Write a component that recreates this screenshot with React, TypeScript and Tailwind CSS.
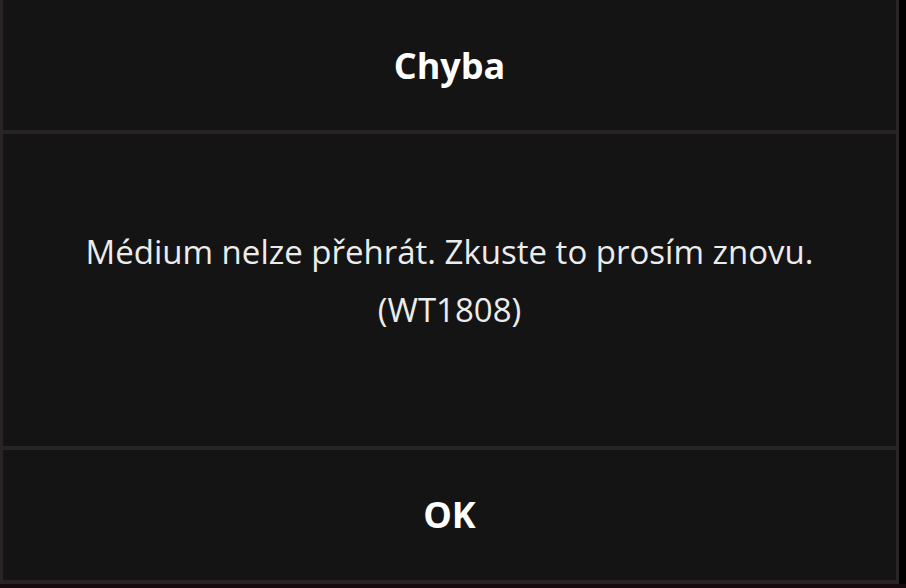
export default function App() {
  return (
    <div className="flex h-[588px] w-[906px] flex-col overflow-hidden bg-[#170a0e]">
      <div className="flex h-[584px] bg-black">
        <div
          className="flex w-[899px] flex-col gap-[4px] bg-[#272326] px-[3px] pb-[4px]"
          style={{ fontFamily: '"Open Sans", "Noto Sans", sans-serif' }}
        >
          <header className="flex h-[130px] items-center justify-center bg-[#141414] pt-[2px]">
            <h1 className="text-[36px] font-bold text-white">Chyba</h1>
          </header>

          <section className="flex h-[312px] flex-col items-center justify-center bg-[#141414] pb-[18px] text-center text-[33px] leading-[58px] text-[#ececec]">
            <p>Médium nelze přehrát. Zkuste to prosím znovu.</p>
            <p>(WT1808)</p>
          </section>

          <button className="flex h-[130px] items-center justify-center bg-[#141414] text-[36px] font-bold text-white">
            OK
          </button>
        </div>
      </div>
    </div>
  );
}
